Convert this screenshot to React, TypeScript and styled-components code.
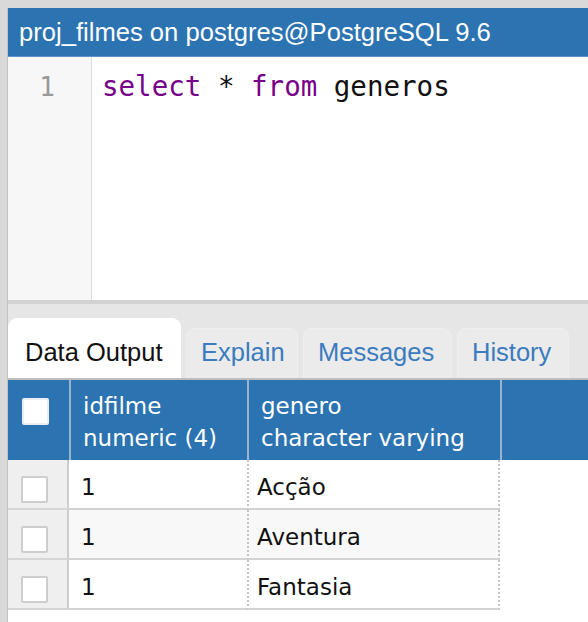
import React from 'react'
import styled, { createGlobalStyle } from 'styled-components'

const blue = '#2c73b1'

const GlobalStyle = createGlobalStyle`
    html, body {
        margin: 0;
        padding: 0;
        background: #d9d9d9;
        overflow: hidden;
    }
`

const Frame = styled.div`
    box-sizing: border-box;
    width: 588px;
    height: 622px;
    padding: 8px 0 0 7px;
`

const Panel = styled.div`
    height: 100%;
    background: #fff;
    border-left: 1px solid #c4c4c4;
    display: flex;
    flex-direction: column;
    font-family: 'Liberation Sans', Arial, sans-serif;
`

const TitleBar = styled.div`
    height: 48px;
    background: ${blue};
    border-bottom: 1px solid #5e93c4;
    color: #fff;
    font-size: 25.6px;
    display: flex;
    align-items: center;
    padding-left: 11px;
    white-space: nowrap;
`

const Editor = styled.div`
    height: 243px;
    display: flex;
`

const Gutter = styled.div`
    width: 84px;
    background: #f7f7f7;
    border-right: 1px solid #dedede;
    box-sizing: border-box;
    padding: 12px 36px 0 0;
    text-align: right;
    color: #999;
    font: 26px/36px 'DejaVu Sans Mono', monospace;
`

const Code = styled.div`
    padding: 11px 0 0 10px;
    font: 27.5px/36px 'DejaVu Sans Mono', monospace;
    color: #111;
    white-space: pre;
`

const Keyword = styled.span`
    color: #770088;
`

const TabBar = styled.div`
    height: 78px;
    box-sizing: border-box;
    background: #e6e6e6;
    border-top: 4px solid #d2d2d2;
    display: flex;
    align-items: flex-end;
    gap: 5px;
`

const Tab = styled.div<{ $active?: boolean; $w: number }>`
    box-sizing: border-box;
    height: ${({ $active }) => ($active ? '60px' : '50px')};
    width: ${({ $w }) => $w}px;
    background: ${({ $active }) => ($active ? '#fff' : '#ebebeb')};
    border: 1px solid ${({ $active }) => ($active ? '#fff' : '#efefef')};
    border-bottom: none;
    border-radius: 9px 9px 0 0;
    color: ${({ $active }) => ($active ? '#111' : '#3b7bbf')};
    font-size: 25.5px;
    display: flex;
    align-items: flex-end;
    padding: 0 0 11px ${({ $active }) => ($active ? '16px' : '14px')};
    white-space: nowrap;
`

const Grid = styled.div`
    display: grid;
    grid-template-columns: 61px 178px 253px 1fr;
    border-top: 2px solid #bdbdbd;
    font-family: 'DejaVu Sans', Verdana, sans-serif;
    font-size: 23px;
`

const HeadCell = styled.div`
    height: 80px;
    box-sizing: border-box;
    background: ${blue};
    color: #fff;
    border-left: 2px solid #9ab4cc;
    padding: 10px 0 0 12px;
    line-height: 32px;
    white-space: nowrap;
    &:first-child {
        border-left: none;
        padding: 18px 0 0 14px;
    }
`

const Box = styled.div<{ $head?: boolean }>`
    width: 27px;
    height: 27px;
    box-sizing: border-box;
    background: #fff;
    border: 2px solid ${({ $head }) => ($head ? '#e9eef3' : '#cdcdcd')};
    border-radius: 2px;
`

const CheckCell = styled.div`
    height: 50px;
    box-sizing: border-box;
    background: #efefef;
    border-right: 2px solid #cdcdcd;
    border-bottom: 2px solid #d6d6d6;
    padding: 16px 0 0 13px;
`

const Cell = styled.div<{ $alt?: boolean; $dotted?: boolean; $pad: number }>`
    height: 50px;
    box-sizing: border-box;
    background: ${({ $alt }) => ($alt ? '#f8f8f8' : '#fff')};
    border-bottom: 2px solid #d3d3d3;
    border-left: ${({ $dotted }) => ($dotted ? '2px dotted #c4c4c4' : 'none')};
    border-right: ${({ $dotted }) => ($dotted ? '2px dotted #c4c4c4' : 'none')};
    color: #111;
    padding: 6px 0 0 ${({ $pad }) => $pad}px;
    display: flex;
    align-items: center;
    white-space: nowrap;
`

const Empty = styled.div`
    height: 50px;
    background: #fff;
`

const rows = [
    { id: '1', genero: 'Acção' },
    { id: '1', genero: 'Aventura' },
    { id: '1', genero: 'Fantasia' },
]

const tabs = [
    { label: 'Data Output', w: 173 },
    { label: 'Explain', w: 112 },
    { label: 'Messages', w: 149 },
    { label: 'History', w: 112 },
]

export default function App() {
    return (
        <Frame>
            <GlobalStyle />
            <Panel>
                <TitleBar>proj_filmes on postgres@PostgreSQL 9.6</TitleBar>

                <Editor>
                    <Gutter>1</Gutter>
                    <Code>
                        <Keyword>select</Keyword> * <Keyword>from</Keyword> generos
                    </Code>
                </Editor>

                <TabBar>
                    {tabs.map((tab, i) => (
                        <Tab key={tab.label} $active={i === 0} $w={tab.w}>
                            {tab.label}
                        </Tab>
                    ))}
                </TabBar>

                <Grid>
                    <HeadCell>
                        <Box $head />
                    </HeadCell>
                    <HeadCell>
                        idfilme
                        <br />
                        numeric (4)
                    </HeadCell>
                    <HeadCell>
                        genero
                        <br />
                        character varying
                    </HeadCell>
                    <HeadCell />

                    {rows.map((row, i) => (
                        <React.Fragment key={i}>
                            <CheckCell>
                                <Box />
                            </CheckCell>
                            <Cell $alt={i === 1} $pad={12}>
                                {row.id}
                            </Cell>
                            <Cell $alt={i === 1} $dotted $pad={8}>
                                {row.genero}
                            </Cell>
                            <Empty />
                        </React.Fragment>
                    ))}
                </Grid>
            </Panel>
        </Frame>
    )
}
